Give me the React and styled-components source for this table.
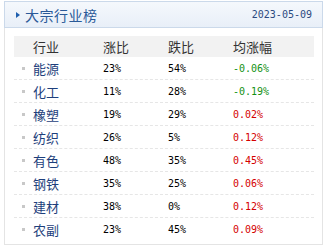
import React from "react";
import styled, { createGlobalStyle } from "styled-components";

const rows = [
  { name: "能源", up: "23%", down: "54%", avg: "-0.06%" },
  { name: "化工", up: "11%", down: "28%", avg: "-0.19%" },
  { name: "橡塑", up: "19%", down: "29%", avg: "0.02%" },
  { name: "纺织", up: "26%", down: "5%", avg: "0.12%" },
  { name: "有色", up: "48%", down: "35%", avg: "0.45%" },
  { name: "钢铁", up: "35%", down: "25%", avg: "0.06%" },
  { name: "建材", up: "38%", down: "0%", avg: "0.12%" },
  { name: "农副", up: "23%", down: "45%", avg: "0.09%" },
];

const App = () => {
  return (
    <>
      <Global />
      <Panel>
        <Header>
          <Title>大宗行业榜</Title>
          <DateText>2023-05-09</DateText>
        </Header>
        <Body>
          <HeadRow>
            <HeadCell $first>行业</HeadCell>
            <HeadCell>涨比</HeadCell>
            <HeadCell>跌比</HeadCell>
            <HeadCell>均涨幅</HeadCell>
          </HeadRow>
          {rows.map((row) => (
            <Row key={row.name}>
              <Name>{row.name}</Name>
              <Num>{row.up}</Num>
              <Num>{row.down}</Num>
              <Num $color={row.avg.startsWith("-") ? "#139113" : "#d40000"}>
                {row.avg}
              </Num>
            </Row>
          ))}
        </Body>
      </Panel>
    </>
  );
};

export default App;

const Global = createGlobalStyle`
  body {
    margin: 0;
    background: #fff;
  }
`;

const Panel = styled.div`
  width: 319px;
  height: 244px;
  margin: 1px 0 0 4px;
  box-sizing: border-box;
  border: 1px solid #e4e4e4;
  border-top: none;
`;

const Header = styled.div`
  height: 27px;
  margin: 0 -1px;
  box-sizing: border-box;
  border: 1px solid #cbd9ea;
  background: linear-gradient(#f5f8fc, #e8eff8);
  display: flex;
  align-items: center;
  justify-content: space-between;
  padding: 0 10px 0 11px;
`;

const Title = styled.div`
  display: flex;
  align-items: center;
  font-family: "Noto Sans CJK SC", sans-serif;
  font-size: 14px;
  letter-spacing: 0.5px;
  color: #2a5a98;

  &::before {
    content: "";
    width: 0;
    height: 0;
    border-top: 3px solid transparent;
    border-bottom: 3px solid transparent;
    border-left: 4px solid #1f5fae;
    margin-right: 5px;
  }
`;

const DateText = styled.div`
  font-family: "DejaVu Sans Mono", monospace;
  font-size: 10px;
  color: #2b4a80;
`;

const Body = styled.div`
  padding: 8px 8px 0 9px;
`;

const grid = `
  display: grid;
  grid-template-columns: 89px 65px 65px 1fr;
  align-items: center;
`;

const HeadRow = styled.div`
  ${grid}
  height: 21px;
  background: #f2f2f2;
`;

const HeadCell = styled.div`
  font-family: "Noto Sans CJK SC", sans-serif;
  font-size: 13px;
  color: #333;
  padding-left: ${(p) => (p.$first ? "19px" : "0")};
`;

const Row = styled.div`
  ${grid}
  height: 23px;
  box-sizing: border-box;
  border-bottom: 1px dashed #e6e6e6;

  &:last-child {
    border-bottom: none;
  }
`;

const Name = styled.div`
  display: flex;
  align-items: center;
  padding-left: 8px;
  font-family: "Noto Sans CJK SC", sans-serif;
  font-size: 13px;
  color: #1e3f7c;

  &::before {
    content: "";
    width: 3px;
    height: 3px;
    background: #c8c8c8;
    margin-right: 8px;
  }
`;

const Num = styled.div`
  font-family: "DejaVu Sans Mono", monospace;
  font-size: 10px;
  color: ${(p) => p.$color || "#000"};
`;
